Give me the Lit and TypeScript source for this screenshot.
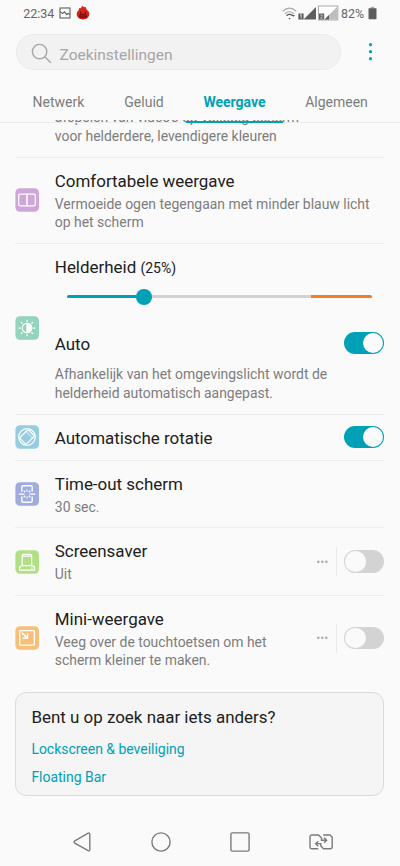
import { LitElement, html, svg, css, nothing } from "lit";
import { customElement, property } from "lit/decorators.js";

const glyphs: Record<string, unknown> = {
  comfort: svg`<path d="M12 6.2H5.2Q3.7 6.2 3.7 7.7V16.3Q3.7 17.8 5.2 17.8H12M12 6.2H18.8Q20.3 6.2 20.3 7.7V16.3Q20.3 17.8 18.8 17.8H12"/><path d="M12 5.5V18.5" stroke-width="1.6"/>`,
  brightness: svg`<circle cx="12" cy="12" r="4.7"/><path d="M12 7.3a4.7 4.7 0 0 1 0 9.4z" fill="#fff"/><path d="M12 3.7v2M12 18.3v2M3.7 12h2M18.3 12h2M6.1 6.1l1.4 1.4M16.5 16.5l1.4 1.4M6.1 17.9l1.4-1.4M16.5 7.5l1.4-1.4"/>`,
  rotate: svg`<rect x="7.4" y="6" width="9.2" height="12" rx="1.2" transform="rotate(45 12 12)"/><path d="M12.3 3.7a8.3 8.3 0 0 1 8 8.3 8.3 8.3 0 0 1-8.3 8.3M11.7 20.3a8.3 8.3 0 0 1-8-8.3A8.3 8.3 0 0 1 12 3.7"/><path d="M10.2 5.8L18.2 13.8" stroke-width=".8"/>`,
  timeout: svg`<path d="M6.8 9.6V5Q6.8 3.8 8 3.8H16Q17.2 3.8 17.2 5V9.6M6.8 14.4V19Q6.8 20.2 8 20.2H16Q17.2 20.2 17.2 19V14.4" stroke-width="1.4"/><path d="M3.8 12h5.6M14.6 12h5.6M12 7.6v2M12 14.4v2M8.7 8.7l1.5 1.5M13.8 13.8l1.5 1.5M8.7 15.3l1.5-1.5M13.8 10.2l1.5-1.5"/>`,
  saver: svg`<path d="M7.2 15.5V5.4Q7.2 4.4 8.2 4.4H15.6Q16.6 4.4 16.6 5.4V15.5M7.2 6.2H16.6M6.6 15.5H17.4L19.5 17.3V20.2H4.5V17.3z"/><path d="M16 18h1.6"/>`,
  mini: svg`<rect x="4.8" y="4.5" width="14.6" height="14.6" rx=".8"/><path d="M7 6.9l5.3 5.2M12.5 7.5v4.8H7.7" stroke-width="1.5"/>`,
};

@customElement("row-icon")
class RowIcon extends LitElement {
  @property() kind = "";
  @property() tint = "";
  static styles = css`
    :host { display: block; width: 24px; height: 24px; flex: none; }
    svg { display: block; }
    .glyph { fill: none; stroke: #fff; stroke-width: 1.25; }
  `;
  render() {
    return html`<svg width="24" height="24" viewBox="0 0 24 24">
      <rect x="0.4" y="0.2" width="23.6" height="23.6" rx="4.5" fill=${this.tint} />
      <g class="glyph">${glyphs[this.kind]}</g>
    </svg>`;
  }
}

@customElement("toggle-switch")
class ToggleSwitch extends LitElement {
  @property({ type: Boolean, reflect: true }) on = false;
  static styles = css`
    :host { display: flex; box-sizing: border-box; width: 39.6px; height: 22.4px; padding: 1px; border-radius: 12px; background: #d3d3d3; flex: none; }
    :host([on]) { background: #00a0b7; justify-content: flex-end; }
    .knob { width: 20.4px; height: 20.4px; border-radius: 50%; background: #fafafa; }
  `;
  render() {
    return html`<div class="knob"></div>`;
  }
}

@customElement("app-root")
class AppRoot extends LitElement {
  static styles = css`
    :host { display: flex; flex-direction: column; height: 866px; overflow: hidden; background: #fafafa; color: #202020; font-family: Roboto, "Noto Sans", sans-serif; }
    * { box-sizing: border-box; }
    svg { display: block; flex: none; }
    .status { display: flex; align-items: center; height: 26px; flex: none; padding: 0 23px 0 23.2px; font-size: 12.5px; color: #666; }
    .status .shot { margin: 0 5px 0 5px; }
    .status .push { margin-left: auto; }
    .pct { margin: 0 4px 0 2px; font-size: 12.4px; }
    .top { display: flex; align-items: center; height: 52px; flex: none; padding-left: 15.5px; }
    .search { display: flex; align-items: center; width: 325px; height: 36px; border: 1px solid #eaeaea; border-radius: 18px; background: #f2f2f2; padding-left: 14.5px; color: #a6a6a6; font-size: 15.5px; }
    .search span { margin-left: 7.5px; padding-top: 5px; }
    .menu { margin-left: 27.5px; }
    .tabs { display: grid; grid-template-columns: 97px 74px 107px 97px; padding-left: 10px; height: 45px; flex: none; border-bottom: 1px solid #ebebeb; position: relative; z-index: 1; }
    .tab { display: flex; justify-content: center; padding-top: 16px; line-height: 16px; font-size: 14px; color: #7c7c7c; height: 45px; }
    .tab.active { color: #00a0b7; font-weight: 700; border-bottom: 2px solid #00a0b7; width: 97px; justify-self: center; }
    .list { padding: 0 16px 0 15px; flex: none; margin-top: -3px; }
    .row { display: flex; border-bottom: 1px solid #ededed; align-items: center; }
    .row.clip { height: 38px; align-items: flex-end; overflow: hidden; padding: 0 0 11.4px 39.8px; }
    .body { margin-left: 15.8px; align-self: flex-start; padding-top: 11.4px; flex: 1; min-width: 0; }
    .title { font-size: 16.95px; line-height: 24px; white-space: nowrap; }
    .sub { font-size: 13.94px; line-height: 18.6px; color: #7d7d7d; margin-top: 1.4px; white-space: pre; }
    .clip .sub { margin: 0; }
    .small { font-size: 14px; }
    .slider { display: flex; align-items: center; height: 16px; margin: 8.6px 12.5px 0 12px; }
    .fill { width: 69.5px; height: 3px; background: #00a0b7; border-radius: 2px 0 0 2px; }
    .thumb { width: 15.6px; height: 15.6px; border-radius: 50%; background: #00a0b7; }
    .rest { flex: 1; height: 3px; background: #d2d2d2; }
    .hot { width: 61px; height: 3px; background: #f47f20; border-radius: 0 2px 2px 0; }
    .auto { display: flex; align-items: center; justify-content: space-between; height: 24px; margin: 27px 0 9.3px; }
    .auto toggle-switch { margin-top: -2px; }
    .h171 .sub { margin-top: 1.6px; }
    .opts { display: flex; align-items: center; height: 29px; border-right: 1px solid #e9e9e9; padding-right: 8px; margin-right: 7.5px; }
    .h86 { height: 86px; } .h171 { height: 171px; } .h46 { height: 46px; }
    .h67 { height: 67px; } .h68 { height: 68px; }
    .h86 row-icon, .h46 row-icon { margin-top: -1px; }
    .h171 row-icon { margin-top: -2px; }
    .h46 toggle-switch { margin-top: -.6px; }
    .last { height: 84px; border: 0; }
    .tight { padding-top: 11px; }
    .h86 .sub { margin-top: 1.6px; }
    .h46 .tight { padding-top: 10.6px; }
    .card { flex: none; margin: 12px 16px 0 15.4px; height: 104px; border: 1px solid #dcdcdc; border-radius: 11px; background: #f5f5f5; padding: 12px 15px; }
    .link { color: #00a0b7; font-size: 13.96px; line-height: 18px; margin-top: 10px; }
    .card .title + .link { margin-top: 10.6px; }
    .nav { display: flex; align-items: center; justify-content: space-between; flex: none; margin-top: 29.8px; padding: 0 67px 0 73px; height: 32px; }
    .circle { margin-left: 1px; }
    .square { margin-left: 1px; }
  `;

  private row(kind: string, tint: string, title: string, sub: string, cls: string, toggle = 0) {
    return html`<div class="row ${cls}">
      <row-icon .kind=${kind} .tint=${tint}></row-icon>
      <div class="body ${cls === "h46" || cls === "h86" ? "tight" : ""}">
        <div class="title">${title}</div>
        ${sub ? html`<div class="sub">${sub}</div>` : nothing}
      </div>
      ${toggle === 1
        ? html`<div class="opts"><svg width="12" height="4" viewBox="0 0 12 4" fill="#b0b0b0"><circle cx="2.3" cy="1.8" r="1.35" /><circle cx="6.3" cy="1.8" r="1.35" /><circle cx="10.3" cy="1.8" r="1.35" /></svg></div>`
        : nothing}
      ${toggle ? html`<toggle-switch ?on=${toggle === 2}></toggle-switch>` : nothing}
    </div>`;
  }

  render() {
    return html`
      <div class="status">
        <span>22:34</span>
        <svg class="shot" width="12" height="12" viewBox="0 0 12 12" fill="none" stroke="#5e5e5e" stroke-width="1.1"><rect x="1" y="1" width="10" height="10" /><path d="M1.2 4.6L3.6 6.6 5.4 4.8 7.8 7.6 9 6.4 11 7.4" /></svg>
        <svg width="14" height="16" viewBox="0 0 14 16"><path d="M2.6 5.2L3.4 3 4.8 3.2 6.4.8 8 2.2 9.6 1.8 10.6 4.4Q13.4 6.2 13.4 9.3 13 14.4 7 14.4 1 14.4.6 9.3.6 6.8 2.6 5.2z" fill="#d5261e" /><path d="M4.7 6.6v2.6M9.3 6.6v2.6" stroke="#7c100e" stroke-width="1.2" /><ellipse cx="7" cy="11" rx="4.2" ry="2.2" fill="#7c100e" /><path d="M5.2 10.9h1M7.8 10.9h1" stroke="#df382b" /></svg>
        <svg class="push" width="57" height="18" viewBox="0 0 57 18">
          <g fill="none" stroke-width="1.2"><path d="M.7 7.2Q7.5 1 14.3 7.2M3 9.7Q7.5 5.8 12 9.7" stroke="#aaa" /><path d="M4.5 11.7Q7.5 9.2 10.8 11.8" stroke="#555" /></g><path d="M6.3 14h2.4L7.5 15.6zM10 11h3l-1.5 1.8z" fill="#555" />
          <path d="M34 3V15.5H21.5z" fill="#5e5e5e" /><rect x="16.4" y="9.5" width="5.2" height="6" fill="#5e5e5e" /><path d="M18 11l1.2-.6v4" stroke="#eee" fill="none" stroke-width=".8" />
          <rect x="36.5" y="2" width="19.3" height="14" fill="#fff" stroke="#aaa" stroke-width="1" /><path d="M55 3V15.5H42.5z" fill="#bebebe" /><path d="M47 11V15.5H42.5z" fill="#5e5e5e" /><rect x="37" y="9.5" width="5.2" height="6" fill="#5e5e5e" /><path d="M38.3 11h2v1.3l-1.8 1.8h2" stroke="#eee" fill="none" stroke-width=".7" />
        </svg>
        <span class="pct">82%</span>
        <svg width="9" height="14" viewBox="0 0 9 14"><rect x="2.7" y=".8" width="3.6" height="2" fill="#aaa" /><rect x=".5" y="2.2" width="8" height="11" rx=".6" fill="#5e5e5e" /></svg>
      </div>
      <div class="top">
        <div class="search">
          <svg width="21" height="21" viewBox="0 0 21 21" fill="none" stroke="#a8a8a8" stroke-width="1.4"><circle cx="8.6" cy="9.6" r="7.2" /><path d="M13.8 14.8L20 21" /></svg>
          <span>Zoekinstellingen</span>
        </div>
        <svg class="menu" width="6" height="20" viewBox="0 0 6 20" fill="#00a0b7"><circle cx="2.5" cy="2.7" r="1.6" /><circle cx="2.5" cy="9.7" r="1.6" /><circle cx="2.5" cy="16.7" r="1.6" /></svg>
      </div>
      <div class="tabs">
        <div class="tab">Netwerk</div>
        <div class="tab">Geluid</div>
        <div class="tab active">Weergave</div>
        <div class="tab">Algemeen</div>
      </div>
      <div class="list">
        <div class="row clip"><div class="sub">afspelen van video's op volledig scherm
voor helderdere, levendigere kleuren</div></div>
        ${this.row("comfort", "#cfa6d9", "Comfortabele weergave", "Vermoeide ogen tegengaan met minder blauw licht\nop het scherm", "h86")}
        <div class="row h171">
          <row-icon .kind=${"brightness"} .tint=${"#94d4bd"}></row-icon>
          <div class="body">
            <div class="title">Helderheid <span class="small">(25%)</span></div>
            <div class="slider"><div class="fill"></div><div class="thumb"></div><div class="rest"></div><div class="hot"></div></div>
            <div class="auto"><div class="title">Auto</div><toggle-switch on></toggle-switch></div>
            <div class="sub">Afhankelijk van het omgevingslicht wordt de
helderheid automatisch aangepast.</div>
          </div>
        </div>
        ${this.row("rotate", "#97cde0", "Automatische rotatie", "", "h46", 2)}
        ${this.row("timeout", "#a0acdd", "Time-out scherm", "30 sec.", "h67")}
        ${this.row("saver", "#b0df84", "Screensaver", "Uit", "h68", 1)}
        ${this.row("mini", "#f7bf78", "Mini-weergave", "Veeg over de touchtoetsen om het\nscherm kleiner te maken.", "last", 1)}
      </div>
      <div class="card">
        <div class="title">Bent u op zoek naar iets anders?</div>
        <div class="link">Lockscreen &amp; beveiliging</div>
        <div class="link">Floating Bar</div>
      </div>
      <div class="nav">
        <svg width="18" height="20" viewBox="0 0 18 20" fill="none" stroke="#7b7b7b" stroke-width="1.4"><path d="M15.2 1.2Q16.8.6 16.8 2.4V17.6Q16.8 19.4 15.2 18.6L1.8 11.2Q.4 10 1.8 8.8z" /></svg>
        <svg class="circle" width="20" height="20" viewBox="0 0 20 20" fill="none" stroke="#7b7b7b" stroke-width="1.4"><circle cx="10" cy="10" r="9.1" /></svg>
        <svg class="square" width="20" height="20" viewBox="0 0 20 20" fill="none" stroke="#7b7b7b" stroke-width="1.4"><rect x=".9" y=".9" width="18.2" height="18.2" rx="1.4" /></svg>
        <svg width="24" height="16" viewBox="0 0 24 16" fill="none" stroke="#7b7b7b" stroke-width="1.4"><path d="M9.3 14.8H3Q1 14.8 1 12.8V3Q1 1 3 1H9.5L12.5 4V6.2H17.5M15 3.8L17.7 6.3 15 8.8M14.2 1H21L23.2 3.2V12.8Q23.2 14.8 21.2 14.8H14.5L11.8 12V9.6H6.8M9.3 7.2L6.6 9.7 9.3 12.2" /></svg>
      </div>
    `;
  }
}
